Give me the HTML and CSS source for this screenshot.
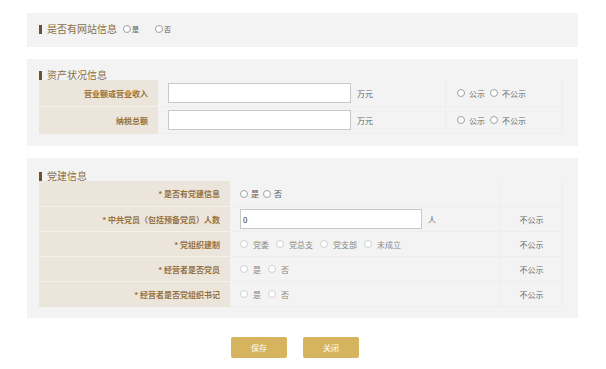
FILE: index.html
```html
<!DOCTYPE html>
<html lang="zh">
<head>
<meta charset="utf-8">
<link rel="stylesheet" href="styles.css">
</head>
<body>
<div class="page">
  <section class="panel p1">
    <div class="title">
      <span class="bar"></span><span class="ttext">是否有网站信息</span>
      <span class="mini"><i class="rd"></i>是</span>
      <span class="mini gap"><i class="rd"></i>否</span>
    </div>
  </section>

  <section class="panel p2">
    <div class="title"><span class="bar"></span><span class="ttext">资产状况信息</span></div>
    <div class="table t2">
      <div class="row">
        <div class="lab">营业额或营业收入</div>
        <div class="val"><span class="inp"></span><span class="unit">万元</span></div>
        <div class="pub"><span class="opt"><i class="rd"></i>公示</span><span class="opt"><i class="rd"></i>不公示</span></div>
      </div>
      <div class="row">
        <div class="lab">纳税总额</div>
        <div class="val"><span class="inp"></span><span class="unit">万元</span></div>
        <div class="pub"><span class="opt"><i class="rd"></i>公示</span><span class="opt"><i class="rd"></i>不公示</span></div>
      </div>
    </div>
  </section>

  <section class="panel p3">
    <div class="title"><span class="bar"></span><span class="ttext">党建信息</span></div>
    <div class="table t3">
      <div class="row first">
        <div class="lab">* 是否有党建信息</div>
        <div class="val"><span class="opt dark"><i class="rd"></i>是</span><span class="opt dark"><i class="rd"></i>否</span></div>
        <div class="pub"></div>
      </div>
      <div class="row">
        <div class="lab">* 中共党员（包括预备党员）人数</div>
        <div class="val"><span class="inp inp3">0</span><span class="unit">人</span></div>
        <div class="pub">不公示</div>
      </div>
      <div class="row">
        <div class="lab">* 党组织建制</div>
        <div class="val"><span class="opt"><i class="rd lt"></i>党委</span><span class="opt"><i class="rd lt"></i>党总支</span><span class="opt"><i class="rd lt"></i>党支部</span><span class="opt"><i class="rd lt"></i>未成立</span></div>
        <div class="pub">不公示</div>
      </div>
      <div class="row">
        <div class="lab">* 经营者是否党员</div>
        <div class="val"><span class="opt"><i class="rd lt"></i>是</span><span class="opt"><i class="rd lt"></i>否</span></div>
        <div class="pub">不公示</div>
      </div>
      <div class="row">
        <div class="lab">* 经营者是否党组织书记</div>
        <div class="val"><span class="opt"><i class="rd lt"></i>是</span><span class="opt"><i class="rd lt"></i>否</span></div>
        <div class="pub">不公示</div>
      </div>
    </div>
  </section>

  <div class="btns">
    <button class="btn">保存</button>
    <button class="btn">关闭</button>
  </div>
</div>
</body>
</html>
```

FILE: styles.css
```css
* { box-sizing: border-box; }
body {
  margin: 0;
  background: #ffffff;
  font-family: "Noto Sans CJK SC", "Noto Sans", sans-serif;
  color: #555;
}
.page {
  padding: 13px 0 0 27px;
  width: 578px;
  display: flex;
  flex-direction: column;
}
.panel {
  background: #f3f3f3;
  padding: 0 15px 0 12px;
}
.p1 { height: 34px; padding-top: 11px; }
.p2 { margin-top: 12px; padding-top: 11px; padding-bottom: 12px; }
.p3 { margin-top: 12px; padding-top: 13px; padding-bottom: 11px; }

.title {
  display: flex;
  align-items: center;
  height: 10px;
}
.bar {
  width: 3px;
  height: 9px;
  background: #6e5130;
  margin-right: 5px;
}
.ttext {
  font-size: 10px;
  line-height: 10px;
  color: #8d6d40;
}
.mini {
  display: flex;
  align-items: center;
  font-size: 7px;
  color: #555;
  margin-left: 6px;
}
.mini.gap { margin-left: 16px; }
.mini .rd { margin-right: 1px; }
.rd {
  display: inline-block;
  width: 8px;
  height: 8px;
  border: 1px solid #a0a0a0;
  border-radius: 50%;
  background: #fff;
  margin-right: 2px;
}
.rd.lt { border-color: #d0d0d0; }

.table { display: flex; flex-direction: column; width: 524px; }
.row { display: flex; height: 27px; }
.t3 .row { height: 25px; }
.t3 .row.first { height: 26px; }
.lab {
  background: #ece5dc;
  color: #94723f;
  font-weight: 600;
  font-size: 8px;
  display: flex;
  align-items: center;
  justify-content: flex-end;
  padding-right: 10px;
  border-bottom: 1px solid #f4f0ea;
}
.row:last-child .lab { border-bottom: none; }
.t2 .lab { width: 119px; }
.t3 .lab { width: 191px; }
.val {
  display: flex;
  align-items: center;
  border-bottom: 1px solid #eeeeee;
  font-size: 8px;
  color: #666;
}
.t2 .val { width: 287px; padding-left: 10px; }
.t3 .val { width: 270px; padding-left: 10px; }
.inp {
  background: #fff;
  border: 1px solid #c8c8c8;
  height: 20px;
  width: 183px;
  font-size: 8px;
  color: #333;
  display: flex;
  align-items: center;
  padding-left: 2px;
}
.inp3 { width: 182px; }
.unit { margin-left: 6px; font-size: 8px; color: #666; }
.pub {
  display: flex;
  align-items: center;
  border-bottom: 1px solid #eeeeee;
  border-left: 1px solid #eeeeee;
  border-right: 1px solid #eeeeee;
  font-size: 8px;
  color: #666;
}
.t2 .pub { width: 118px; padding-left: 11px; }
.t3 .pub { width: 63px; justify-content: center; }
.opt {
  display: flex;
  align-items: center;
  margin-right: 7px;
  color: #888;
}
.opt .rd { margin-right: 5px; }
.t2 .opt { color: #666; margin-right: 5px; }
.t2 .opt .rd { margin-right: 4px; }
.opt.dark { color: #555; margin-right: 4px; }
.opt.dark .rd { margin-right: 3px; }

.btns {
  display: flex;
  gap: 16px;
  margin-top: 19px;
  padding-left: 204px;
}
.btn {
  width: 56px;
  height: 21px;
  border: none;
  border-radius: 2px;
  background: #d5b35f;
  color: #fff;
  font-family: "Noto Sans CJK SC", sans-serif;
  font-size: 8px;
  padding: 0;
}
```
